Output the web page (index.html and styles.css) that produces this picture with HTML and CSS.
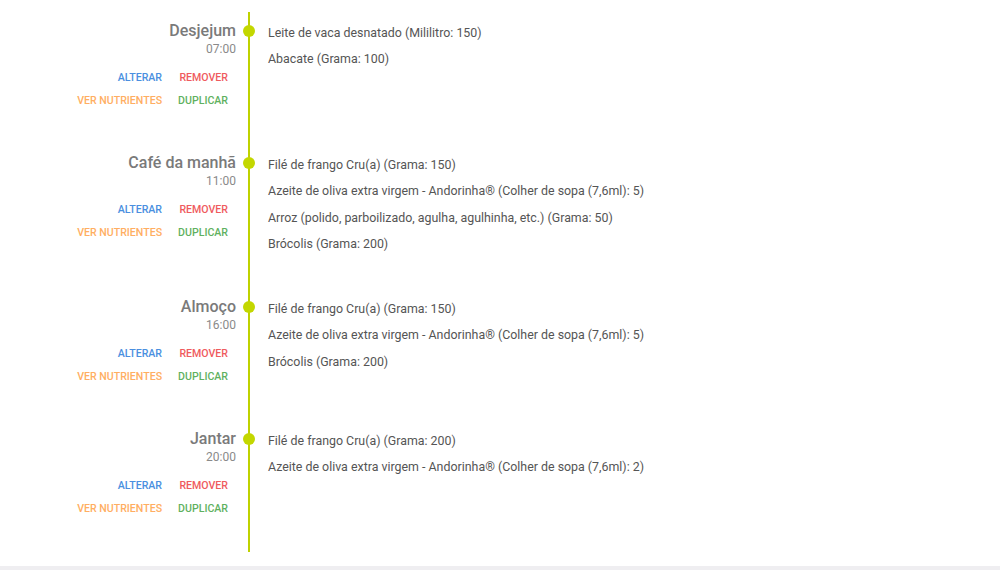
FILE: index.html
```html
<!DOCTYPE html>
<html lang="pt-BR">
<head>
<meta charset="utf-8">
<title>Refeições</title>
<link rel="stylesheet" href="styles.css">
</head>
<body>
<div class="page">
  <main class="timeline">
    <section class="meal">
      <div class="meal-side">
        <div class="meal-title">Desjejum</div>
        <div class="meal-time">07:00</div>
        <div class="actions">
          <a class="act act-edit">Alterar</a>
          <a class="act act-remove">Remover</a>
          <a class="act act-nutri">Ver nutrientes</a>
          <a class="act act-dup">Duplicar</a>
        </div>
      </div>
      <ul class="meal-items">
        <li>Leite de vaca desnatado (Mililitro: 150)</li>
        <li>Abacate (Grama: 100)</li>
      </ul>
    </section>
    <section class="meal">
      <div class="meal-side">
        <div class="meal-title">Café da manhã</div>
        <div class="meal-time">11:00</div>
        <div class="actions">
          <a class="act act-edit">Alterar</a>
          <a class="act act-remove">Remover</a>
          <a class="act act-nutri">Ver nutrientes</a>
          <a class="act act-dup">Duplicar</a>
        </div>
      </div>
      <ul class="meal-items">
        <li>Filé de frango Cru(a) (Grama: 150)</li>
        <li>Azeite de oliva extra virgem - Andorinha® (Colher de sopa (7,6ml): 5)</li>
        <li>Arroz (polido, parboilizado, agulha, agulhinha, etc.) (Grama: 50)</li>
        <li>Brócolis (Grama: 200)</li>
      </ul>
    </section>
    <section class="meal">
      <div class="meal-side">
        <div class="meal-title">Almoço</div>
        <div class="meal-time">16:00</div>
        <div class="actions">
          <a class="act act-edit">Alterar</a>
          <a class="act act-remove">Remover</a>
          <a class="act act-nutri">Ver nutrientes</a>
          <a class="act act-dup">Duplicar</a>
        </div>
      </div>
      <ul class="meal-items">
        <li>Filé de frango Cru(a) (Grama: 150)</li>
        <li>Azeite de oliva extra virgem - Andorinha® (Colher de sopa (7,6ml): 5)</li>
        <li>Brócolis (Grama: 200)</li>
      </ul>
    </section>
    <section class="meal">
      <div class="meal-side">
        <div class="meal-title">Jantar</div>
        <div class="meal-time">20:00</div>
        <div class="actions">
          <a class="act act-edit">Alterar</a>
          <a class="act act-remove">Remover</a>
          <a class="act act-nutri">Ver nutrientes</a>
          <a class="act act-dup">Duplicar</a>
        </div>
      </div>
      <ul class="meal-items">
        <li>Filé de frango Cru(a) (Grama: 200)</li>
        <li>Azeite de oliva extra virgem - Andorinha® (Colher de sopa (7,6ml): 2)</li>
      </ul>
    </section>
  </main>
  <footer class="bottom-bar"></footer>
</div>
</body>
</html>
```
FILE: styles.css
```css
* { box-sizing: border-box; }
html, body {
  margin: 0;
  padding: 0;
  background: #ffffff;
  font-family: Roboto, "Liberation Sans", Arial, sans-serif;
}
.page {
  height: 570px;
  display: flex;
  flex-direction: column;
}
.timeline {
  flex: 1;
  padding-top: 12px;
}
.meal {
  display: flex;
  align-items: stretch;
}
.meal-side {
  width: 248px;
  flex: none;
  padding: 9px 12px 32.6px 0;
  text-align: right;
}
.meal-title {
  font-size: 16px;
  line-height: 20px;
  font-weight: 500;
  color: #7a7a7a;
}
.meal-time {
  font-size: 12px;
  line-height: 16px;
  color: #8a8a8a;
}
.actions {
  margin-top: 8.5px;
  display: grid;
  grid-template-columns: auto auto;
  justify-content: end;
}
.act {
  display: block;
  padding: 0 8px;
  font-size: 10.6px;
  line-height: 23px;
  font-weight: 500;
  text-transform: uppercase;
  text-align: right;
  cursor: pointer;
}
.act-edit { color: #4a8fe0; }
.act-remove { color: #ef5b5e; }
.act-nutri { color: #ffae62; }
.act-dup { color: #5fb15f; }
.meal-items {
  position: relative;
  list-style: none;
  margin: 0;
  flex: 1;
  border-left: 2px solid #bfd200;
  padding: 7.5px 0 30.1px 18px;
}
.meal-items::before {
  content: "";
  position: absolute;
  left: -7px;
  top: 13px;
  width: 12px;
  height: 12px;
  border-radius: 50%;
  background: #c3d700;
}
.meal-items li {
  font-size: 12.4px;
  line-height: 26.6px;
  color: #555555;
  white-space: nowrap;
}
.bottom-bar {
  height: 4px;
  flex: none;
  background: #efeef1;
}
```
